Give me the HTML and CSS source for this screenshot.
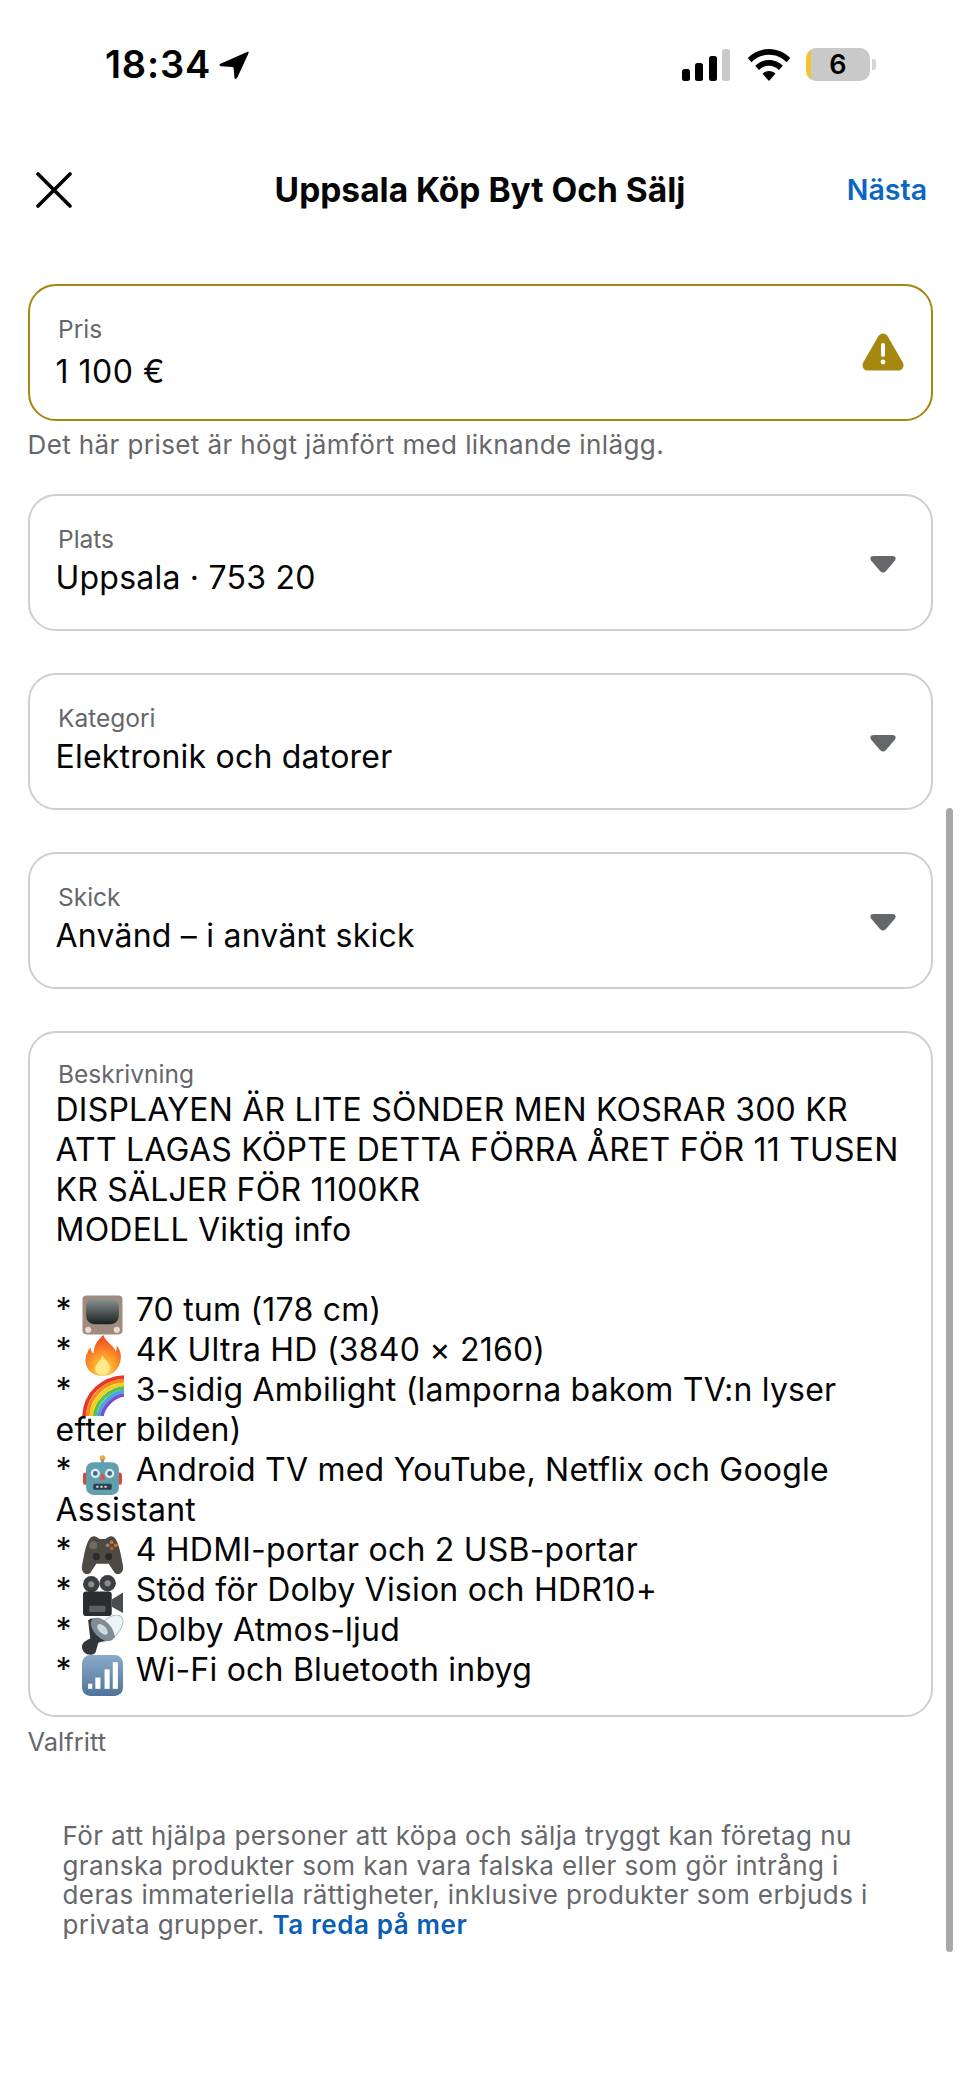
FILE: index.html
```html
<!DOCTYPE html>
<html lang="sv">
<head>
    <meta charset="UTF-8">
    <meta name="viewport" content="width=device-width, initial-scale=1.0">
    <title>Uppsala Köp Byt Och Sälj</title>
    <link rel="stylesheet" href="styles.css">
</head>
<body>
    <div class="screen">
        <div class="status-bar">
            <div class="status-left">
                <span class="time">18:34</span>
                <svg class="loc-arrow" viewBox="0 0 32 32"><path d="M30 3 L2 15.500 Q0.500 17 3 17.800 L15 18.500 Q16 18.500 16.200 20 L17 30 Q18 32 20 29.500 L31.500 4.500 Q32 1.500 30 3 Z" fill="#000"/></svg>
            </div>
            <div class="status-right">
                <svg class="signal" viewBox="0 0 48 32">
                    <rect x="0" y="20" width="8" height="12" rx="2.500" fill="#000"/>
                    <rect x="13" y="14" width="8" height="18" rx="2.500" fill="#000"/>
                    <rect x="27" y="7" width="8" height="25" rx="2.500" fill="#000"/>
                    <rect x="40" y="0" width="8" height="32" rx="2.500" fill="#c9c9c9"/>
                </svg>
                <svg class="wifi" viewBox="0 0 44 32">
                    <path d="M22 0 C13.500 0 6 3.500 0.800 9 L4.500 13.200 C9 8.500 15.200 5.800 22 5.800 C28.800 5.800 35 8.500 39.500 13.200 L43.200 9 C38 3.500 30.500 0 22 0 Z" fill="#000"/>
                    <path d="M22 11 C16.500 11 11.500 13.200 8.200 16.800 L12 21 C14.500 18.300 18 16.700 22 16.700 C26 16.700 29.500 18.300 32 21 L35.800 16.800 C32.500 13.200 27.500 11 22 11 Z" fill="#000"/>
                    <path d="M22 22 C19.500 22 17.200 23 15.600 24.700 L22 32 L28.400 24.700 C26.800 23 24.500 22 22 22 Z" fill="#000"/>
                </svg>
                <div class="battery">
                    <span class="battery-level">6</span>
                    <span class="battery-nub"></span>
                </div>
            </div>
        </div>

        <div class="nav-bar">
            <svg class="close-icon" viewBox="0 0 36 36"><path d="M2 2 L34 34 M34 2 L2 34" stroke="#000" stroke-width="3.600" stroke-linecap="round" fill="none"/></svg>
            <div class="nav-title">Uppsala Köp Byt Och Sälj</div>
            <div class="nav-next">Nästa</div>
        </div>

        <div class="form">
            <div class="field field-warning">
                <div class="field-text">
                    <div class="field-label">Pris</div>
                    <div class="field-value price-value">1 100 €</div>
                </div>
                <svg class="warning-icon" viewBox="0 0 42 38">
                    <path d="M16.500 3 C18.500 -0.500 23.500 -0.500 25.500 3 L40.800 29.500 C42.800 33 40.300 37.500 36.300 37.500 L5.700 37.500 C1.700 37.500 -0.800 33 1.200 29.500 Z" fill="#a6870f"/>
                    <rect x="19" y="10" width="4" height="14" rx="2" fill="#fff"/>
                    <circle cx="21" cy="29" r="2.400" fill="#fff"/>
                </svg>
            </div>
            <div class="hint">Det här priset är högt jämfört med liknande inlägg.</div>

            <div class="field field-select first-select">
                <div class="field-text">
                    <div class="field-label">Plats</div>
                    <div class="field-value">Uppsala · 753 20</div>
                </div>
                <svg class="caret" viewBox="0 0 26 17"><path d="M4 0 L22 0 Q27 0 25 4.500 L16 15 Q13 18 10 15 L1 4.500 Q-1 0 4 0 Z" fill="#65676b"/></svg>
            </div>

            <div class="field field-select">
                <div class="field-text">
                    <div class="field-label">Kategori</div>
                    <div class="field-value">Elektronik och datorer</div>
                </div>
                <svg class="caret" viewBox="0 0 26 17"><path d="M4 0 L22 0 Q27 0 25 4.500 L16 15 Q13 18 10 15 L1 4.500 Q-1 0 4 0 Z" fill="#65676b"/></svg>
            </div>

            <div class="field field-select">
                <div class="field-text">
                    <div class="field-label">Skick</div>
                    <div class="field-value">Använd – i använt skick</div>
                </div>
                <svg class="caret" viewBox="0 0 26 17"><path d="M4 0 L22 0 Q27 0 25 4.500 L16 15 Q13 18 10 15 L1 4.500 Q-1 0 4 0 Z" fill="#65676b"/></svg>
            </div>

            <div class="field field-area">
                <div class="field-label">Beskrivning</div>
                <div class="area-text">
                    DISPLAYEN ÄR LITE SÖNDER MEN KOSRAR 300 KR<br>
                    ATT LAGAS KÖPTE DETTA FÖRRA ÅRET FÖR 11 TUSEN<br>
                    KR SÄLJER FÖR 1100KR<br>
                    MODELL Viktig info<br>
                    <br>
                    * <svg class="emoji" viewBox="0 0 40 40">
                        <defs>
                            <linearGradient id="tvScreen" x1="0" y1="0" x2="0" y2="1"><stop offset="0" stop-color="#8a9492"/><stop offset="1" stop-color="#1d2122"/></linearGradient>
                        </defs>
                        <rect x="0.500" y="0.500" width="39" height="38" rx="4" fill="#a08c7e"/>
                        <rect x="4" y="3.500" width="32" height="25" rx="8" fill="url(#tvScreen)"/>
                        <circle cx="6" cy="34" r="3" fill="#e8dccf"/>
                        <circle cx="34" cy="34" r="3" fill="#e8dccf"/>
                    </svg> 70 tum (178 cm)<br>
                    * <svg class="emoji" viewBox="0 0 40 40">
                        <defs>
                            <radialGradient id="fireFill" cx="0.500" cy="0.850" r="0.750"><stop offset="0" stop-color="#fff2a8"/><stop offset="0.350" stop-color="#ffb02e"/><stop offset="1" stop-color="#f2501e"/></radialGradient>
                        </defs>
                        <path d="M21 0 C22 6 31 10 33 16 C34 14 34 12 33.500 10 C38 15 39 21 37 27 C35 35 28 40 20 40 C11 40 4 34 3.500 26 C3 20 6 16 8 12 C8.500 15 9.500 17 11.500 18 C11 11 15 5 21 0 Z" fill="url(#fireFill)"/>
                        <path d="M20 20 C22 25 28 27 27 33 C26 37 23 39 20 39 C16 39 13 37 13 33 C13 28 18 26 20 20 Z" fill="#ffe98a"/>
                    </svg> 4K Ultra HD (3840 × 2160)<br>
                    * <svg class="emoji" viewBox="0 0 40 40">
                        <g fill="none" stroke-width="3.600">
                            <path d="M2 40 C3 18 20 3 41 2" stroke="#e8352e"/>
                            <path d="M5.500 40 C6.500 21 22 6 41 5.500" stroke="#f58a1f"/>
                            <path d="M9 40 C10 24 24 10 41 9" stroke="#f7d117"/>
                            <path d="M12.500 40 C13.500 27 26 13.500 41 12.500" stroke="#5cc04a"/>
                            <path d="M16 40 C17 30 28 17 41 16" stroke="#3fa9e8"/>
                            <path d="M19.500 40 C20.500 32 30 20.500 41 19.500" stroke="#7b4fc9"/>
                        </g>
                    </svg> 3-sidig Ambilight (lamporna bakom TV:n lyser<br>
                    efter bilden)<br>
                    * <svg class="emoji" viewBox="0 0 40 40">
                        <circle cx="20" cy="3" r="2.800" fill="#f4a93b"/>
                        <rect x="18.500" y="4" width="3" height="4" fill="#8d9aa3"/>
                        <rect x="1" y="17" width="5" height="12" rx="2.500" fill="#d9483b"/>
                        <rect x="34" y="17" width="5" height="12" rx="2.500" fill="#d9483b"/>
                        <rect x="4" y="7" width="32" height="32" rx="7" fill="#5f9fae"/>
                        <circle cx="13" cy="18" r="4.500" fill="#dcecf2"/>
                        <circle cx="27" cy="18" r="4.500" fill="#dcecf2"/>
                        <circle cx="13" cy="18" r="2.300" fill="#3e6c7e"/>
                        <circle cx="27" cy="18" r="2.300" fill="#3e6c7e"/>
                        <path d="M20 17 L23 24 L17 24 Z" fill="#e0523f"/>
                        <rect x="11" y="28" width="18" height="6" rx="1.500" fill="#2e3f49"/>
                        <path d="M14 31 H26" stroke="#dcecf2" stroke-width="2" stroke-dasharray="2 2"/>
                    </svg> Android TV med YouTube, Netflix och Google<br>
                    Assistant<br>
                    * <svg class="emoji" viewBox="0 0 40 40">
                        <path d="M9 2 C12 0 15 2 17 4 L23 4 C25 2 28 0 31 2 C36 6 38 20 40 30 C41 37 36 40 32 37 L26 28 L14 28 L8 37 C4 40 -1 37 0 30 C2 20 4 6 9 2 Z" fill="#4d4a44"/>
                        <circle cx="11" cy="10" r="4" fill="#6d6a62"/>
                        <circle cx="14" cy="21" r="3.500" fill="#2b2a28"/>
                        <circle cx="26" cy="21" r="3.500" fill="#2b2a28"/>
                        <circle cx="29" cy="7" r="1.800" fill="#d96a28"/>
                        <circle cx="33" cy="10" r="1.800" fill="#d96a28"/>
                        <circle cx="29" cy="13" r="1.800" fill="#c45a22"/>
                        <circle cx="25" cy="10" r="1.800" fill="#8f8a80"/>
                    </svg> 4 HDMI-portar och 2 USB-portar<br>
                    * <svg class="emoji" viewBox="0 0 40 40">
                        <circle cx="9" cy="9" r="8" fill="#3c3d40"/>
                        <circle cx="25" cy="8" r="8" fill="#3c3d40"/>
                        <circle cx="9" cy="9" r="3" fill="#8a8c90"/>
                        <circle cx="25" cy="8" r="3" fill="#8a8c90"/>
                        <rect x="1" y="16" width="28" height="24" rx="3" fill="#2b2c2f"/>
                        <rect x="7" y="30" width="16" height="6" rx="1" fill="#5d5f63"/>
                        <path d="M29 24 L40 17 L40 37 L29 31 Z" fill="#4b4c50"/>
                    </svg> Stöd för Dolby Vision och HDR10+<br>
                    * <svg class="emoji" viewBox="0 0 40 40">
                        <ellipse cx="27" cy="13" rx="9" ry="16" transform="rotate(-135 27 13)" fill="#eef4f6" stroke="#a9c3cc" stroke-width="1"/>
                        <path d="M6 5 C12 -1 30 10 32 22 L16 27 L13 37 C8 41 0 38 0 31 C0 27 4 25 8 23 Z" fill="#33363a"/>
                        <ellipse cx="20" cy="14" rx="8" ry="14" transform="rotate(-45 20 14)" fill="#7f8c95"/>
                        <ellipse cx="20" cy="14" rx="3.500" ry="6.500" transform="rotate(-45 20 14)" fill="#cfd9de"/>
                    </svg> Dolby Atmos-ljud<br>
                    * <svg class="emoji" viewBox="0 0 40 40">
                        <defs>
                            <linearGradient id="barsBg" x1="0" y1="0" x2="0" y2="1"><stop offset="0" stop-color="#8aaac8"/><stop offset="1" stop-color="#4f7399"/></linearGradient>
                        </defs>
                        <rect x="0" y="0" width="40" height="40" rx="8" fill="url(#barsBg)"/>
                        <rect x="6" y="28" width="4" height="5" fill="#fff"/>
                        <rect x="13" y="22" width="5" height="11" fill="#fff"/>
                        <rect x="22" y="14" width="5" height="19" fill="#fff"/>
                        <rect x="30" y="7" width="5" height="26" fill="#fff"/>
                    </svg> Wi-Fi och Bluetooth inbyg
                </div>
            </div>
            <div class="hint hint-optional">Valfritt</div>

            <p class="legal">För att hjälpa personer att köpa och sälja tryggt kan företag nu<br>granska produkter som kan vara falska eller som gör intrång i<br>deras immateriella rättigheter, inklusive produkter som erbjuds i<br>privata grupper. <a class="legal-link">Ta reda på mer</a></p>
        </div>

        <div class="scrollbar"></div>
    </div>
</body>
</html>
```

FILE: styles.css
```css
body {
    margin: 0;
    background: #fff;
    color: #050505;
    font-family: "Inter", "Liberation Sans", sans-serif;
}
.screen {
    position: relative;
    width: 960px;
    height: 2081px;
    overflow: hidden;
    background: #fff;
}

/* status bar */
.status-bar {
    display: flex;
    justify-content: space-between;
    align-items: center;
    height: 33px;
    padding: 48px 90px 0 105px;
}
.status-left {
    display: flex;
    align-items: center;
    gap: 7px;
}
.time {
    font-size: 38px;
    font-weight: 600;
    line-height: 33px;
    letter-spacing: 0.8px;
    color: #000;
}
.loc-arrow {
    width: 31px;
    height: 31px;
}
.status-right {
    display: flex;
    align-items: center;
}
.signal {
    width: 48px;
    height: 32px;
}
.wifi {
    width: 44px;
    height: 32px;
    margin-left: 17px;
}
.battery {
    position: relative;
    width: 64px;
    height: 33px;
    margin-left: 15px;
    border-radius: 10px;
    background: linear-gradient(to right, #f2c530 5px, #c9c9c9 5px);
    text-align: center;
}
.battery-level {
    font-size: 27px;
    font-weight: 600;
    line-height: 33px;
    color: #000;
}
.battery-nub {
    position: absolute;
    top: 11px;
    right: -6px;
    width: 4px;
    height: 11px;
    border-radius: 0 3px 3px 0;
    background: #d4d4d4;
}

/* nav */
.nav-bar {
    position: relative;
    display: flex;
    align-items: center;
    justify-content: center;
    height: 60px;
    margin-top: 79px;
}
.close-icon {
    position: absolute;
    left: 36px;
    top: 12px;
    width: 36px;
    height: 36px;
}
.nav-title {
    font-size: 33.500px;
    font-weight: 700;
    color: #050505;
}
.nav-next {
    position: absolute;
    right: 33px;
    top: 12px;
    font-size: 28.500px;
    font-weight: 600;
    color: #0a66c2;
}

/* form */
.form {
    margin-top: 64px;
    padding: 0 27.500px;
}
.field {
    box-sizing: border-box;
    width: 905px;
    display: flex;
    align-items: center;
    justify-content: space-between;
    height: 137px;
    padding: 0 29px;
    border: 2.5px solid #ccd0d5;
    border-radius: 28px;
}
.field-warning {
    border-color: #a6870f;
}
.field-select {
    margin-top: 42px;
}
.field-select .field-text {
    margin-top: -4px;
}
.first-select {
    margin-top: 33px;
}
.field-label {
    font-size: 24.500px;
    line-height: 30px;
    color: #65676b;
    margin-left: -0.500px;
}
.field-value {
    font-size: 32px;
    line-height: 40px;
    letter-spacing: 0.22px;
    margin-left: -3px;
    margin-top: 4px;
}
.price-value {
    margin-top: 8px;
    letter-spacing: 0.5px;
}
.warning-icon {
    width: 42px;
    height: 38px;
    margin-top: -2px;
    margin-right: -2.500px;
}
.caret {
    width: 26px;
    height: 17px;
    margin-top: 3px;
    margin-right: 6px;
}
.hint {
    font-size: 26px;
    line-height: 32px;
    letter-spacing: 0.4px;
    color: #65676b;
    margin-top: 8px;
}
.field-area {
    display: block;
    height: 686px;
    margin-top: 42px;
    padding: 26px 29px 0;
}
.area-text {
    font-size: 32px;
    line-height: 40px;
    letter-spacing: 0.22px;
    white-space: nowrap;
    margin-left: -3px;
    margin-top: 1px;
}
.emoji {
    width: 43px;
    height: 41px;
    margin: -6px 2px -6px 0.500px;
    vertical-align: -9px;
}
.hint-optional {
    font-size: 25.500px;
    letter-spacing: 0;
    margin-top: 9px;
}
.legal {
    margin: 63px 0 0 35px;
    font-size: 26px;
    line-height: 29.500px;
    color: #65676b;
    letter-spacing: 0.4px;
}
.legal-link {
    font-weight: 600;
    letter-spacing: 0.6px;
    color: #0a5fb4;
}

/* overlay scroll indicator */
.scrollbar {
    position: absolute;
    left: 946px;
    top: 808px;
    width: 7px;
    height: 1144px;
    border-radius: 4px;
    background: #a8a8a8;
}
```
